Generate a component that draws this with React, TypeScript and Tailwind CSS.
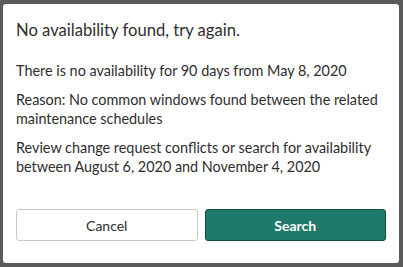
export default function App() {
  return (
    <div className="w-[403px] h-[267px] bg-[#5b5b5b] pt-[4px] pl-[3px]" style={{ fontFamily: "Lato, 'Open Sans', sans-serif" }}>
      <div className="w-[396px] h-[259px] bg-white rounded-[3px] flex flex-col px-[13px] text-[#2e2e2e]">
        <h2 className="text-[16.6px] leading-[22px] mt-[15px]">No availability found, try again.</h2>
        <div className="mt-[20px] text-[14.4px] leading-[19px]">
          <p>There is no availability for 90 days from May 8, 2020</p>
          <p className="mt-[10px]">Reason: No common windows found between the related maintenance schedules</p>
          <p className="mt-[10px]">Review change request conflicts or search for availability between August 6, 2020 and November 4, 2020</p>
        </div>
        <div className="mt-auto mb-[22px] flex gap-[7px]">
          <button className="w-[182px] h-[32px] rounded-[3px] border border-[#c8c8c8] bg-white text-[14px] text-[#2e2e2e]">Cancel</button>
          <button className="w-[182px] h-[32px] rounded-[3px] border border-[#0f4a40] bg-[#1f7a6b] text-[14px] font-bold text-white">Search</button>
        </div>
      </div>
    </div>
  );
}
